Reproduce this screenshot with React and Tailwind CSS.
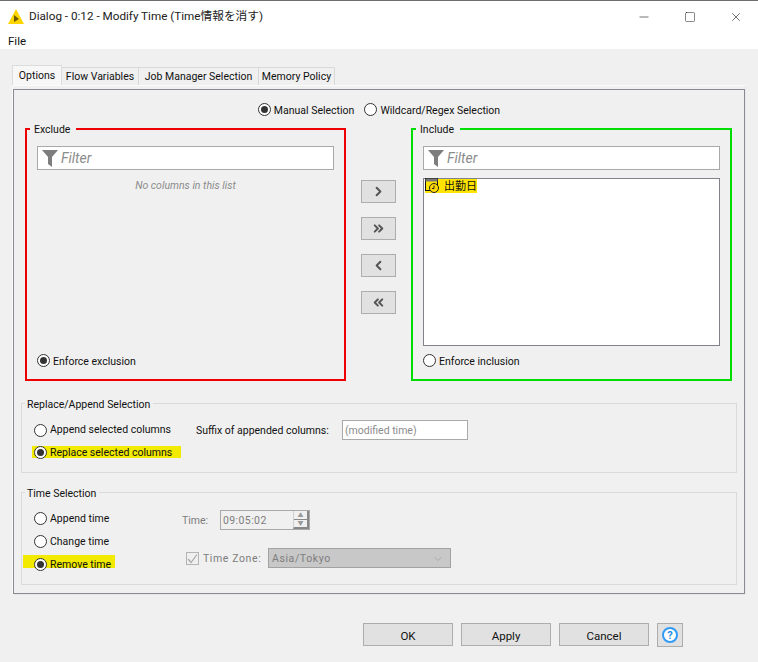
import { Minus, Square, X, ChevronRight, ChevronLeft, ChevronsRight, ChevronsLeft, ChevronDown } from 'lucide-react';

const Radio = ({ checked }) => (
  <span className="w-[13px] h-[13px] shrink-0 rounded-full border border-[#333] bg-white flex items-center justify-center">
    {checked && <span className="w-[7px] h-[7px] rounded-full bg-[#333]" />}
  </span>
);

const RadioLabel = ({ checked, label, className = '', textClass = 'pt-[2px]' }) => (
  <div className={`flex items-center gap-[3px] h-[13px] whitespace-nowrap ${className}`}>
    <Radio checked={checked} />
    <span className={textClass}>{label}</span>
  </div>
);

const FunnelIcon = () => (
  <svg width="16" height="17" viewBox="0 0 16 17" className="shrink-0">
    <path d="M0 0 H16 L10 7 V17 L6 14 V7 Z" fill="#7d7d7d" />
  </svg>
);

const FilterInput = () => (
  <div className="h-6 bg-white border border-[#a9a9a9] flex items-center pl-1 gap-[3px]">
    <FunnelIcon />
    <span className="italic text-[14px] leading-4 -mt-px text-[#8c8c8c]">Filter</span>
  </div>
);

const ColumnGroup = ({ title, color, enforce, checked, children }) => (
  <fieldset className={`w-[321px] h-[260px] border-2 ${color}`}>
    <legend className="ml-[3px] pl-1 pr-[6px] h-4 leading-[18px]">{title}</legend>
    <div className="px-[10px] h-[242px]">
      <div className="pt-[9px]">
        <FilterInput />
      </div>
      <div className="mt-2 h-[168px]">{children}</div>
      <RadioLabel checked={checked} label={enforce} className="mt-2" />
    </div>
  </fieldset>
);

const ArrowButton = ({ children }) => (
  <button className="w-[35px] h-[23px] bg-[#e1e1e1] border border-[#adadad] flex items-center justify-center text-[#555]">
    {children}
  </button>
);

const DialogButton = ({ label }) => (
  <button className="w-[90px] h-[23px] pt-[2px] bg-[#e1e1e1] border border-[#adadad] text-[11.5px] leading-4 text-[#111]">{label}</button>
);

export default function App() {
  const tabs = [
    { label: 'Flow Variables', w: 'w-[77px]' },
    { label: 'Job Manager Selection', w: 'w-[120px]' },
    { label: 'Memory Policy', w: 'w-[76px]' },
  ];

  return (
    <div className="w-[758px] h-[662px] overflow-hidden bg-[#f0f0f0] text-[10.5px] text-[#111] font-['Roboto','Noto_Sans_CJK_JP',sans-serif]">
      {/* Title + menu */}
      <div className="bg-white h-[49px] border-t border-[#6e6e6e]">
        <div className="h-[31px] flex items-center pl-2">
          <svg width="16" height="15" viewBox="0 0 16 15" className="shrink-0">
            <path d="M8 0 L16 15 H0 Z" fill="#ffd500" />
            <path d="M6 6 L11 10 L6 13 Z" fill="#6b5a00" />
          </svg>
          <span className="ml-[5px] text-[11.7px] text-[#222]">Dialog - 0:12 - Modify Time (Time情報を消す)</span>
          <div className="ml-auto flex items-center text-[#111]">
            <Minus size={14} strokeWidth={1} className="mr-[33px]" />
            <Square size={12} strokeWidth={1} className="mr-[33px]" />
            <X size={14} strokeWidth={1} className="mr-[15px]" />
          </div>
        </div>
        <div className="pl-2 text-[11.5px] leading-4 pt-px">File</div>
      </div>

      <div className="ml-3 pt-4 w-[734px]">
        {/* Tabs */}
        <div className="flex items-end h-5">
          <div className="w-[50px] h-5 bg-[#f7f7f7] border border-b-0 border-[#dcdcdc] flex items-center justify-center">Options</div>
          {tabs.map((tab) => (
            <div key={tab.label} className={`${tab.w} h-[18px] bg-[#f0f0f0] border border-l-0 border-b-0 border-[#d9d9d9] flex items-center justify-center whitespace-nowrap`}>
              {tab.label}
            </div>
          ))}
        </div>

        <div className="border border-[#fbfbfb] pt-[3px] border-r-[#e8e8e8] border-b-[#e8e8e8]">
          <div className="h-[505px] border border-[#8a8a94]">
            {/* Selection mode */}
            <div className="flex justify-center gap-[10px] pt-[13px] h-[31px]">
              <RadioLabel checked label="Manual Selection" />
              <RadioLabel label="Wildcard/Regex Selection" />
            </div>

            {/* Column lists */}
            <div className="flex ml-[11px]">
              <ColumnGroup title="Exclude" color="border-[#ee0000]" enforce="Enforce exclusion" checked>
                <div className="text-center italic leading-4 text-[#8c8c8c]">No columns in this list</div>
              </ColumnGroup>

              <div className="w-[65px] pl-[15px] pt-[59px] flex flex-col gap-[14px]">
                <ArrowButton><ChevronRight size={15} strokeWidth={3.2} /></ArrowButton>
                <ArrowButton><ChevronsRight size={15} strokeWidth={3.2} /></ArrowButton>
                <ArrowButton><ChevronLeft size={15} strokeWidth={3.2} /></ArrowButton>
                <ArrowButton><ChevronsLeft size={15} strokeWidth={3.2} /></ArrowButton>
              </div>

              <ColumnGroup title="Include" color="border-[#00dd00]" enforce="Enforce inclusion">
                <div className="h-full bg-white border border-[#82828c] pl-[1px]">
                  <div className="w-[52px] h-[14px] bg-[#ffe400] flex items-center gap-[5px]">
                    <svg width="14" height="15" viewBox="0 0 14 15" className="shrink-0 -mt-[1px]">
                      <rect x="0.5" y="0.5" width="12" height="12" fill="none" stroke="#111" />
                      <rect x="0.5" y="0.5" width="12" height="3" fill="#777" />
                      <circle cx="9" cy="10" r="4.5" fill="#ffd800" stroke="#222" />
                      <path d="M9 7.5 V10.5 H7" fill="none" stroke="#222" />
                    </svg>
                    <span className="text-[11px] leading-none whitespace-nowrap">出勤日</span>
                  </div>
                </div>
              </ColumnGroup>
            </div>

            {/* Replace/Append */}
            <fieldset className="mt-[14px] ml-[7px] w-[716px] h-[78px] border border-[#dadada]">
              <legend className="ml-[3px] pl-[2px] pr-[3px] h-4 leading-[19px]">Replace/Append Selection</legend>
              <div className="pt-[9px]">
                <div className="flex items-center h-5 pl-3">
                  <RadioLabel label="Append selected columns" className="w-[162px]" textClass="" />
                  <span className="w-[146px] pt-px whitespace-nowrap">Suffix of appended columns:</span>
                  <div className="w-[126px] h-5 bg-white border border-[#a9a9a9] pl-[2px] leading-5 text-[#8c8c8c]">(modified time)</div>
                </div>
                <div className="mt-[6px] ml-[10px] pl-[2px] w-[149px] h-3 bg-[#f2ea00] flex items-center">
                  <RadioLabel checked label="Replace selected columns" textClass="pt-px" />
                </div>
              </div>
            </fieldset>

            {/* Time selection */}
            <fieldset className="mt-[11px] ml-[7px] w-[716px] h-[101px] border border-[#dadada]">
              <legend className="ml-[3px] pl-[2px] pr-[3px] h-4 leading-[19px]">Time Selection</legend>
              <div className="flex">
                <div className="w-[160px] pl-3 pt-3">
                  <RadioLabel label="Append time" textClass="" />
                  <RadioLabel label="Change time" className="mt-[10px]" textClass="" />
                  <div className="mt-[7px] -ml-[11px] pl-[11px] pt-[3px] w-[92px] h-[13px] bg-[#f2ea00]">
                    <RadioLabel checked label="Remove time" textClass="" />
                  </div>
                </div>

                <div className="pt-[10px] text-[#7d7d7d]">
                  <div className="flex items-center">
                    <span className="w-[38px] pt-px">Time:</span>
                    <div className="w-[90px] h-5 border border-[#a9a9a9] flex">
                      <span className="flex-1 pl-[2px] leading-5 tracking-[0.4px]">09:05:02</span>
                      <div className="w-4 flex flex-col border-l border-[#d0d0d0] border-r-2 border-r-[#888] border-b-2 border-b-[#888]">
                        <span className="flex-1 flex items-center justify-center text-[6px] leading-none border-b border-[#888] text-[#999]">▲</span>
                        <span className="flex-1 flex items-center justify-center text-[6px] leading-none text-[#999]">▼</span>
                      </div>
                    </div>
                  </div>
                  <div className="flex items-center mt-[18px] ml-1">
                    <span className="w-[13px] h-[13px] border border-[#b4b4b4] bg-[#f0f0f0] flex items-center justify-center">
                      <svg width="11" height="11" viewBox="0 0 11 11">
                        <path d="M1 6 L4 9.5 L10 1.5" fill="none" stroke="#a8a8a8" strokeWidth="1.2" />
                      </svg>
                    </span>
                    <span className="ml-1 w-[65px] pt-px tracking-[0.6px] whitespace-nowrap">Time Zone:</span>
                    <div className="w-[183px] h-5 bg-[#c8c8c8] border border-[#a2a2a2] flex items-center justify-between pl-[3px] pr-[6px]">
                      <span className="pt-px tracking-[0.6px]">Asia/Tokyo</span>
                      <ChevronDown size={12} strokeWidth={1} className="text-[#888] mt-[2px]" />
                    </div>
                  </div>
                </div>
              </div>
            </fieldset>
          </div>
        </div>

        {/* Dialog actions */}
        <div className="flex items-start mt-[28px] ml-[351px] gap-2">
          <DialogButton label="OK" />
          <DialogButton label="Apply" />
          <DialogButton label="Cancel" />
          <button className="w-[26px] h-6 bg-[#e1e1e1] border border-[#adadad] flex items-center justify-center">
            <span className="w-4 h-4 rounded-full border-2 border-[#2f9bf5] bg-white flex items-center justify-center text-[11px] leading-none font-bold text-[#1e8ce6]">?</span>
          </button>
        </div>
      </div>
    </div>
  );
}
